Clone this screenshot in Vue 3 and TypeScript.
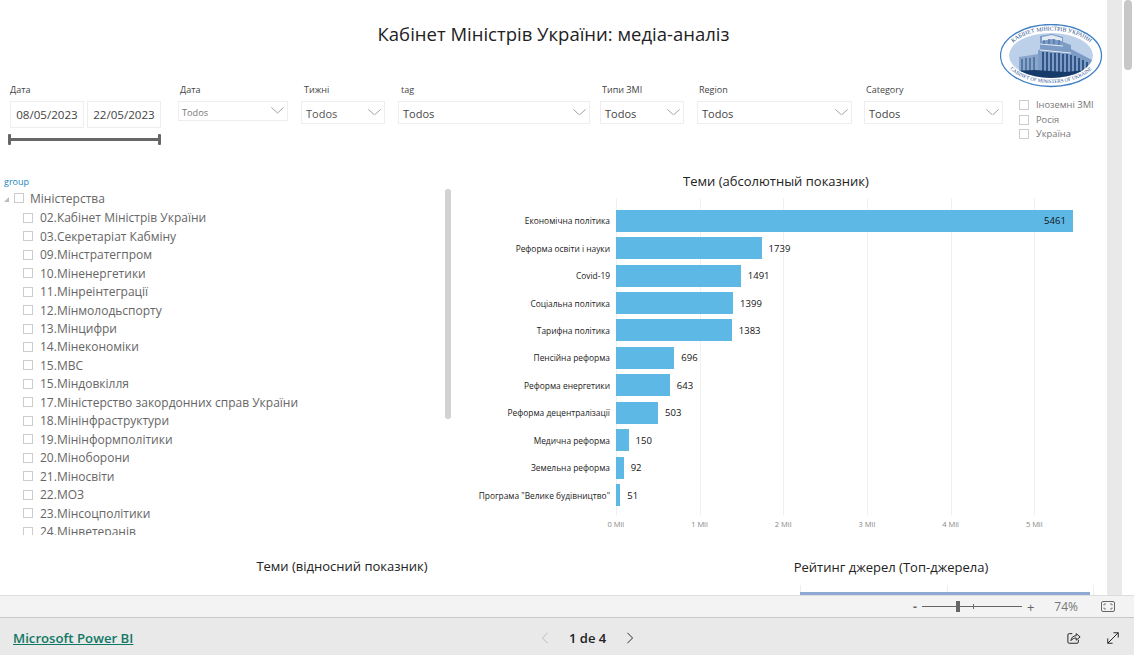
<script setup lang="ts">
interface Filter { label: string; value: string; cls: string }
const filters: Filter[] = [
  { label: 'Дата', value: 'Todos', cls: 'f-small' },
  { label: 'Тижні', value: 'Todos', cls: 'f-week' },
  { label: 'tag', value: 'Todos', cls: 'f-tag' },
  { label: 'Типи ЗМІ', value: 'Todos', cls: 'f-type' },
  { label: 'Region', value: 'Todos', cls: 'f-region' },
  { label: 'Category', value: 'Todos', cls: 'f-cat' },
]
const checks = ['Іноземні ЗМІ', 'Росія', 'Україна']
const tree = [
  '02.Кабінет Міністрів України', '03.Секретаріат Кабміну', '09.Мінстратегпром', '10.Міненергетики',
  '11.Мінреінтеграції', '12.Мінмолодьспорту', '13.Мінцифри', '14.Мінекономіки', '15.МВС', '15.Міндовкілля',
  '17.Міністерство закордонних справ України', '18.Мінінфраструктури', '19.Мінінформполітики', '20.Міноборони',
  '21.Міносвіти', '22.МОЗ', '23.Мінсоцполітики', '24.Мінветеранів',
]
const bars = [
  ['Економічна політика', 5461], ['Реформа освіти і науки', 1739], ['Covid-19', 1491], ['Соціальна політика', 1399],
  ['Тарифна політика', 1383], ['Пенсійна реформа', 696], ['Реформа енергетики', 643], ['Реформа децентралізації', 503],
  ['Медична реформа', 150], ['Земельна реформа', 92], ['Програма "Велике будівництво"', 51],
] as [string, number][]
const barWidth = (v: number) => `${(v * 0.0837).toFixed(1)}px`
const axis = ['0 Mil', '1 Mil', '2 Mil', '3 Mil', '4 Mil', '5 Mil']
</script>

<template>
  <div class="app">
    <div class="viewport">
      <main class="canvas">
        <header class="head">
          <h1>Кабінет Міністрів України: медіа-аналіз</h1>
          <svg class="logo" viewBox="0 0 104 64" aria-label="Кабінет Міністрів України">
            <defs>
              <path id="arcTop" d="M7 31.500 A44.500 25 0 0 1 96 31.500" />
              <path id="arcBot" d="M4 31.500 A47 27.500 0 0 0 98 31.500" />
              <clipPath id="inner"><ellipse cx="51" cy="31.500" rx="42" ry="22.500" /></clipPath>
            </defs>
            <ellipse cx="51" cy="31.500" rx="50.500" ry="31" fill="#fff" stroke="#3f7fc4" stroke-width="1.300" />
            <g clip-path="url(#inner)">
              <rect x="5" y="5" width="94" height="54" fill="#bdd0ea" />
              <path d="M19 33l19-3v18H19z" fill="#8aa6cc" />
              <path d="M22 35v12M26 34v13M30 34v13M34 33v14" stroke="#36608f" stroke-width="1.300" />
              <path d="M38 27l2-2V12l12-2 11 3v5l8 3v4l21 11v16H38z" fill="#7c9cc6" />
              <path d="M42 13l10-2 10 3v3l-10-2-10 2z" fill="#e3ebf5" />
              <path d="M40 20l23 2M40 26l31 3" stroke="#e3ebf5" stroke-width="1" />
              <path d="M43 28v20M47 28v20M51 29v19M55 29v19M59 29v19M63 30v18M67 30v18M71 31v17M75 32v16M79 34v14M83 36v12M87 38v10" stroke="#24497b" stroke-width="1.700" />
              <path d="M44 16v4M49 15v5M54 15v5M59 16v5" stroke="#4c74a6" stroke-width="1.300" />
              <path d="M5 47l30-1 30 2 34-3v14H5z" fill="#173a68" />
              <path d="M30 53q20 3 42-1v8H30z" fill="#bdd0ea" />
            </g>
            <text class="arc"><textPath href="#arcTop" startOffset="50%" text-anchor="middle">КАБІНЕТ МІНІСТРІВ УКРАЇНИ</textPath></text>
            <text class="arc low"><textPath href="#arcBot" startOffset="50%" text-anchor="middle">CABINET OF MINISTERS OF UKRAINE</textPath></text>
          </svg>
        </header>

        <section class="filters">
          <div class="filter f-date">
            <label>Дата</label>
            <div class="dates"><span>08/05/2023</span><span>22/05/2023</span></div>
            <div class="range"><i></i><b></b><i></i></div>
          </div>
          <div v-for="f in filters" :key="f.label + f.cls" class="filter" :class="f.cls">
            <label>{{ f.label }}</label>
            <div class="select">
              <span>{{ f.value }}</span>
              <svg class="chev" viewBox="0 0 13 6.500"><path d="M.4.400 6.500 6 12.600.400" fill="none" stroke="#888" stroke-width=".8" /></svg>
            </div>
          </div>
          <ul class="checks">
            <li v-for="c in checks" :key="c"><i class="box"></i>{{ c }}</li>
          </ul>
        </section>

        <section class="middle">
          <aside class="slicer">
            <div class="slicer-title">group</div>
            <div class="tree-wrap">
              <div class="tree">
                <div class="node root"><span class="tri"></span><i class="box"></i>Міністерства</div>
                <div v-for="t in tree" :key="t" class="node"><i class="box"></i>{{ t }}</div>
              </div>
              <div class="tree-thumb"></div>
            </div>
          </aside>
          <section class="chart">
            <h2>Теми (абсолютный показник)</h2>
            <div class="plot">
              <div class="grid"><i v-for="a in axis" :key="a"></i></div>
              <div v-for="[name, value] in bars" :key="name" class="row">
                <span class="name">{{ name }}</span>
                <span class="track">
                  <span class="bar" :style="{ width: barWidth(value) }"></span>
                  <span class="val" :class="{ inside: value > 5000 }">{{ value }}</span>
                </span>
              </div>
            </div>
            <div class="axis"><span v-for="a in axis" :key="a">{{ a }}</span></div>
          </section>
        </section>

        <section class="lower">
          <h2 class="t-left">Теми (відносний показник)</h2>
          <div class="rating">
            <h2>Рейтинг джерел (Топ-джерела)</h2>
            <div class="rating-plot"><i></i><i></i><i></i><div class="rating-bar"></div></div>
          </div>
        </section>
      </main>
      <div class="vscroll"><div class="vtrack"></div><div class="vlane"><div class="vthumb"></div></div></div>
    </div>

    <div class="zoombar">
      <span class="minus">-</span>
      <div class="slider"><i class="tick"></i><i class="handle"></i></div>
      <span class="plus">+</span>
      <span class="pct">74%</span>
      <svg class="fit" viewBox="0 0 14 11"><rect x=".5" y=".5" width="13" height="10" rx="1.500" fill="none" stroke="#666" /><path d="M3 4.500V3h2M11 4.500V3H9M3 6.500V8h2M11 6.500V8H9" fill="none" stroke="#666" stroke-width=".8" /></svg>
    </div>

    <footer class="foot">
      <a class="brand">Microsoft Power BI</a>
      <nav class="pager">
        <svg class="pg off" viewBox="0 0 8 14"><path d="M7 1 1 7l6 6" fill="none" stroke="currentColor" stroke-width="1.100" /></svg>
        <span>1 de 4</span>
        <svg class="pg" viewBox="0 0 8 14"><path d="m1 1 6 6-6 6" fill="none" stroke="currentColor" stroke-width="1.100" /></svg>
      </nav>
      <div class="actions">
        <svg viewBox="0 0 16 16"><path d="M6 3H2.500A1.500 1.500 0 0 0 1 4.500v8A1.500 1.500 0 0 0 2.500 14h9a1.500 1.500 0 0 0 1.500-1.500V10" fill="none" stroke="#222" stroke-width="1.100" /><path d="M4.500 11c.3-3.500 2.500-5.500 6-5.500V3L15 6.800 10.500 10.500V8c-2.500 0-4.500 1-6 3z" fill="none" stroke="#222" stroke-width="1.100" /></svg>
        <svg viewBox="0 0 16 16"><path d="M2 14 14 2M8.500 2H14v5.500M2 8.500V14h5.500" fill="none" stroke="#222" stroke-width="1.100" /></svg>
      </div>
    </footer>
  </div>
</template>

<style>
html, body { margin: 0; background: #fff; overflow: hidden; }
</style>

<style scoped>
.app { width: 1134px; height: 655px; display: flex; flex-direction: column; overflow: hidden; font-family: "Open Sans", "Noto Sans", sans-serif; color: #333; background: #fff; }
.viewport { height: 595px; display: flex; flex: none; }
.canvas { width: 1107px; flex: none; display: flex; flex-direction: column; overflow: hidden; }

.head { height: 84px; flex: none; position: relative; display: flex; justify-content: center; }
h1 { margin: 21px 0 0; font-size: 18.500px; font-weight: 400; line-height: 25px; color: #222; }
.logo { position: absolute; left: 1000px; top: 24px; width: 104px; height: 64px; }
.arc { font-family: "Liberation Serif", serif; font-size: 5.800px; fill: #1f4f8f; }
.arc.low { font-size: 5px; }

.filters { display: flex; height: 82px; flex: none; padding-left: 10px; box-sizing: border-box; font-size: 11px; }
.filter { display: flex; flex-direction: column; flex: none; }
.filter label { font-size: 9px; line-height: 12px; color: #444; margin-bottom: 5px; padding-left: 2px; }
.f-date { width: 151px; margin-right: 17px; }
.f-date label { padding-left: 0; }
.dates { display: flex; gap: 3px; }
.dates span { flex: 1; height: 27px; border: 1px solid #eee; box-sizing: border-box; text-align: center; font-size: 11.600px; line-height: 25px; color: #444; }
.range { display: flex; align-items: center; margin-top: 6px; margin-left: -2px; }
.range b { flex: 1; height: 3px; background: #666; }
.range i { width: 3px; height: 11px; background: #666; border-radius: 1px; }
.select { display: flex; align-items: center; justify-content: space-between; height: 23px; border: 1px solid #eee; box-sizing: border-box; padding: 2px 3px 0 4px; color: #555; }
.chev { width: 13px; height: 6.500px; margin-top: -3px; }
.f-small .select { height: 20px; padding-left: 3px; font-size: 9.200px; color: #777; }
.f-small { width: 110px; margin-right: 13px; }
.f-week { width: 84px; margin-right: 13px; }
.f-week label, .f-tag label { padding-left: 3px; }
.f-tag { width: 192px; margin-right: 10px; }
.f-type { width: 84px; margin-right: 13px; }
.f-region { width: 155px; margin-right: 12px; }
.f-cat { width: 139px; margin-right: 16px; }
.f-tag .select, .f-type .select, .f-region .select, .f-cat .select { color: #444; }

.checks { list-style: none; margin: 14px 0 0; padding: 0; font-size: 9.300px; line-height: 14.500px; color: #777; }
.checks li { display: flex; align-items: center; gap: 7px; white-space: nowrap; }
.box { display: block; width: 8px; height: 8px; border: 1px solid #ccc; flex: none; }

.middle { display: flex; height: 372px; flex: none; }
.slicer { width: 460px; flex: none; display: flex; flex-direction: column; }
.slicer-title { font-size: 9px; line-height: 12px; color: #1a86c0; padding: 10px 0 0 4px; }
.tree-wrap { position: relative; height: 346px; overflow: hidden; margin-top: 1px; }
.tree { padding-top: 1px; }
.node { display: flex; align-items: center; gap: 7px; height: 18.470px; padding-left: 23px; font-size: 12px; color: #666; white-space: nowrap; }
.root { padding-left: 4px; gap: 0; margin-top: -1px; margin-bottom: 1px; }
.root .box { margin-right: 6px; }
.tri { width: 0; height: 0; border-left: 5px solid transparent; border-bottom: 5px solid #bbb; margin-right: 5px; margin-top: 3px; }
.tree-thumb { position: absolute; left: 445px; top: 0; width: 6px; height: 230px; border-radius: 3px; background: #d2d2d2; }

.chart { width: 647px; flex: none; display: flex; flex-direction: column; }
.chart h2 { margin: 6px 0 0; text-align: center; padding-right: 15px; }
h2 { font-size: 13px; font-weight: 400; line-height: 18px; color: #222; }
.plot { position: relative; height: 317px; margin-top: 8px; padding-top: 9px; box-sizing: border-box; }
.grid { position: absolute; left: 156px; top: 0; bottom: 0; display: flex; }
.grid i { display: block; width: 83.700px; border-left: 1px solid #f0f0f0; box-sizing: border-box; }
.row { position: relative; display: flex; align-items: center; height: 27.450px; }
.name { width: 150px; margin-right: 6px; text-align: right; font-size: 8.400px; color: #222; white-space: nowrap; }
.track { display: flex; align-items: center; gap: 7px; height: 22px; }
.bar { display: block; height: 100%; background: #5db8e6; }
.val { font-size: 9.500px; color: #111; }
.val.inside { margin-left: -36px; }
.axis { display: flex; padding-left: 114px; margin-top: 4px; }
.axis span { width: 83.700px; text-align: center; font-size: 7.500px; line-height: 10px; color: #888; }

.lower { display: flex; flex: none; height: 57px; }
.lower h2 { margin: 0; text-align: center; }
.t-left { width: 684px; padding-top: 19px; }
.rating { flex: 1; display: flex; flex-direction: column; padding-top: 20px; }
.rating h2 { width: 414px; }
.rating-plot { position: relative; width: 294px; height: 10px; margin: 9px 0 0 116px; display: flex; justify-content: space-between; }
.rating-plot i { width: 1px; background: #eee; }
.rating-bar { position: absolute; left: 0; right: 4px; bottom: 0; height: 3px; background: #8fa9d4; }

.vscroll { flex: 1; display: flex; }
.vtrack { width: 15px; background: #e9e9e9; }
.vlane { flex: 1; padding: 0 2px; }
.vthumb { height: 70px; border-radius: 4px; background: #c8c8c8; }

.zoombar { height: 23px; flex: none; box-sizing: border-box; display: flex; align-items: center; justify-content: flex-end; background: #f3f3f3; border-top: 1px solid #ddd; border-bottom: 1px solid #c8c8c8; font-size: 12px; color: #666; padding-right: 19px; }
.minus { font-weight: 700; margin-right: 5px; }
.slider { position: relative; width: 100px; height: 1px; background: #666; }
.handle { position: absolute; left: 34px; top: -5px; width: 4px; height: 11px; background: #666; }
.tick { position: absolute; left: 51px; top: -2px; width: 1px; height: 5px; background: #666; }
.plus { margin: 0 6px 0 5px; font-size: 13px; }
.pct { margin-left: 14px; margin-right: 23px; color: #777; }
.fit { width: 14px; height: 11px; }

.foot { flex: 1; position: relative; display: flex; align-items: center; justify-content: space-between; background: #e9e9e9; padding: 3px 13px 0; }
.brand { font-size: 13.200px; font-weight: 600; color: #117865; text-decoration: underline; }
.pager { position: absolute; left: 541px; top: 3px; bottom: 0; display: flex; align-items: center; gap: 20px; font-size: 13px; font-weight: 600; color: #222; }
.pg { width: 8px; height: 12px; }
.pg.off { color: #bbb; }
.actions { display: flex; gap: 25px; padding-right: 1px; }
.actions svg { width: 14px; height: 14px; }
</style>
